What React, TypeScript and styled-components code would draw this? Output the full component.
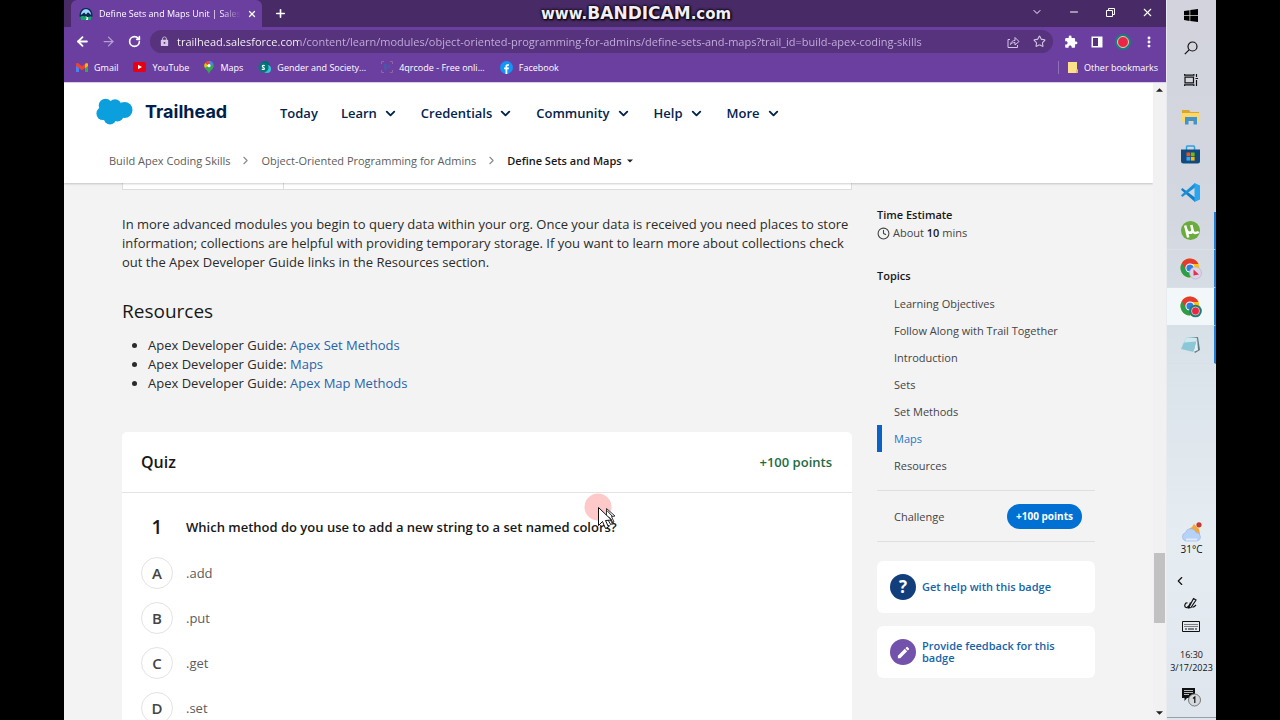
import React from 'react';
import styled, { createGlobalStyle } from 'styled-components';
import { ArrowLeft, ArrowRight, ChevronDown, ChevronLeft, ChevronRight, Clock, EllipsisVertical, Minus, Plus, RotateCw, Star, X } from 'lucide-react';
import { MdExtension, MdLock, MdModeEdit } from 'react-icons/md';

const GlobalStyle = createGlobalStyle`
  *, *::before, *::after { box-sizing: border-box; }
  body { margin: 0; background: #000; font-family: "Open Sans", "Noto Sans", sans-serif; font-size: 13px; color: #181818; }
  h1, h2, h3, p, ul, ol { margin: 0; padding: 0; }
  a { color: inherit; text-decoration: none; }
  button { font: inherit; color: inherit; background: none; border: 0; padding: 0; cursor: pointer; }
  svg { display: block; flex: none; }
`;

/* ---------- desktop ---------- */
const Desktop = styled.div`
  display: flex;
  height: 100vh;
  padding: 0 5%;
  overflow: hidden;
`;
const Browser = styled.div`
  flex: 1;
  min-width: 0;
  display: flex;
  flex-direction: column;
  background: #6b3fa0;
`;

/* ---------- browser chrome ---------- */
const TabStrip = styled.div`
  position: relative;
  display: flex;
  align-items: flex-end;
  height: 27px;
  padding-left: 7px;
  background: #482a66;
  color: #fff;
`;
const Tab = styled.div`
  display: flex;
  align-items: center;
  gap: 6px;
  width: 191px;
  height: 27px;
  padding: 0 8px;
  border-radius: 6px 6px 0 0;
  background: #6b3fa0;
`;
const TabTitle = styled.span`
  flex: 1;
  white-space: nowrap;
  font-size: 9px;
  mask-image: linear-gradient(90deg, #000 85%, transparent);
`;
const NewTab = styled.button`
  display: grid;
  place-items: center;
  width: 28px;
  height: 27px;
  margin-left: 4px;
`;
const Watermark = styled.div`
  position: absolute;
  left: 477px;
  top: 3px;
  font: bold 15px/20px "DejaVu Sans", sans-serif;
  color: #f2edf6;
  text-shadow: 0 0 3px #000, 0 0 3px #000, 1px 1px 2px #000;
  white-space: nowrap;
  b { font-size: 17px; }
`;
const WindowControls = styled.div`
  display: flex;
  align-self: flex-start;
  margin-left: auto;
`;
const WindowButton = styled.button`
  display: grid;
  place-items: center;
  width: 37px;
  height: 24px;
`;
const Toolbar = styled.div`
  display: flex;
  align-items: center;
  height: 29px;
  padding: 0 4px 0 5px;
  color: #fff;
`;
const ToolButton = styled.button<{ $faded?: boolean }>`
  display: grid;
  place-items: center;
  width: 26px;
  height: 22px;
  opacity: ${(p) => (p.$faded ? 0.5 : 1)};
`;
const AddressBar = styled.div`
  display: flex;
  flex: 1;
  align-items: center;
  height: 23px;
  margin: 0 5px 0 3px;
  padding: 0 1px 0 9px;
  border-radius: 12px;
  background: #56337c;
  color: #d5c6e6;
`;
const AddressInput = styled.input`
  flex: 1;
  min-width: 0;
  margin-left: 7px;
  padding: 0;
  border: 0;
  outline: 0;
  font: 11px/20px "Open Sans", sans-serif;
  color: transparent;
  background: linear-gradient(90deg, #fff 122px, #c9b3e0 122px) text;
`;
const Bookmarks = styled.nav`
  display: flex;
  align-items: center;
  gap: 15px;
  height: 26px;
  padding: 0 8px 4px 12px;
  font-size: 9px;
  color: #fff;
`;
const Bookmark = styled.a`
  display: flex;
  align-items: center;
  gap: 6px;
  white-space: nowrap;
`;
const OtherBookmarks = styled(Bookmark)`
  margin-left: auto;
  padding-left: 9px;
  border-left: 1px solid #9270b8;
`;

/* ---------- page ---------- */
const Viewport = styled.div`
  flex: 1;
  min-height: 0;
  display: flex;
  border-top: 1px solid #d9cfe4;
`;
const Page = styled.div`
  flex: 1;
  min-width: 0;
  overflow: hidden;
  background: #f3f3f3;
`;
const Header = styled.header`
  position: relative;
  height: 100px;
  background: #fff;
  box-shadow: 0 1px 2px rgba(0, 0, 0, 0.2);
`;
const NavRow = styled.div`
  display: flex;
  align-items: center;
  height: 60px;
  padding-left: 32px;
`;
const Brand = styled.a`
  display: flex;
  align-items: center;
  gap: 12px;
  width: 184px;
  padding-bottom: 3px;
  font: bold 18px/24px Inter, sans-serif;
  color: #001e4b;
`;
const NavList = styled.ul`
  display: flex;
  gap: 23px;
  list-style: none;
`;
const NavButton = styled.button`
  display: flex;
  align-items: center;
  gap: 6px;
  font-weight: 600;
  font-size: 13px;
  line-height: 20px;
  color: #03234d;
`;
const Breadcrumb = styled.nav`
  display: flex;
  align-items: center;
  gap: 9px;
  height: 35px;
  padding-left: 45px;
  font-size: 11px;
  color: #5c5c5c;
`;
const CurrentCrumb = styled.button`
  display: flex;
  align-items: center;
  gap: 5px;
  font-weight: 600;
  color: #181818;
`;
const Columns = styled.div`
  display: grid;
  grid-template-columns: minmax(0, 1fr) 218px;
  gap: 25px;
  padding: 0 58px;
`;
const Article = styled.article`
  min-width: 0;
`;
const TableEnd = styled.table`
  width: 100%;
  height: 6px;
  border-collapse: collapse;
  background: #fff;
  td { height: 6px; padding: 0; border: 1px solid #ddd; border-top: 0; }
  td:first-child { width: 161px; }
`;
const Paragraph = styled.p`
  margin-top: 25px;
  line-height: 19px;
  color: #2b2b2b;
`;
const SectionTitle = styled.h2`
  margin-top: 26px;
  font-size: 19px;
  font-weight: 400;
  line-height: 26px;
`;
const ResourceList = styled.ul`
  margin-top: 12px;
  padding-left: 26px;
  line-height: 19px;
  color: #2b2b2b;
  a { color: #2a62a8; }
`;
const Quiz = styled.section`
  position: relative;
  margin-top: 39px;
  border-radius: 5px;
  background: #fff;
`;
const QuizHeader = styled.header`
  display: flex;
  align-items: center;
  justify-content: space-between;
  height: 61px;
  padding: 0 20px 0 19px;
  border-bottom: 1px solid #e3e3e3;
  h2 { font-size: 16px; font-weight: 600; }
  span { font-weight: 600; color: #1d6b45; }
`;
const Question = styled.fieldset`
  margin: 0;
  padding: 0 19px;
  border: 0;
`;
const Prompt = styled.legend`
  display: grid;
  grid-template-columns: 32px 1fr;
  gap: 13px;
  align-items: center;
  width: 100%;
  height: 64px;
  padding: 4px 0 0;
  font-weight: 600;
  b { font-size: 19px; font-weight: 600; line-height: 26px; text-align: center; }
`;
const Choices = styled.div`
  display: grid;
  gap: 13px;
  padding-bottom: 24px;
`;
const Choice = styled.label`
  display: grid;
  grid-template-columns: 32px 1fr;
  column-gap: 13px;
  align-items: center;
  height: 32px;
  color: #5c5c5c;
`;
const ChoiceRadio = styled.input`
  grid-area: 1 / 1;
  appearance: none;
  width: 32px;
  height: 32px;
  margin: 0;
  border: 1px solid #e3e3e3;
  border-radius: 50%;
  &:checked { border-color: #0070d2; }
`;
const ChoiceLetter = styled.span`
  grid-area: 1 / 1;
  text-align: center;
  font-size: 15px;
  font-weight: 600;
  color: #444;
`;
const Pointer = styled.div`
  position: absolute;
  left: 462px;
  top: 61px;
  pointer-events: none;
`;

/* ---------- page sidebar ---------- */
const Aside = styled.aside`
  padding-top: 22px;
  font-size: 11px;
  line-height: 19px;
  color: #444;
`;
const AsideTitle = styled.h3`
  font-size: 11px;
  font-weight: 600;
  line-height: 19px;
  color: #181818;
`;
const Estimate = styled.p`
  display: flex;
  align-items: center;
  gap: 3px;
  margin-bottom: 24px;
  line-height: 18px;
  b { font-weight: 600; color: #181818; }
`;
const TopicList = styled.ul`
  margin-top: 5px;
  list-style: none;
`;
const Topic = styled.a<{ $active?: boolean }>`
  display: block;
  padding-left: 12px;
  border-left: 5px solid ${(p) => (p.$active ? '#0b62c4' : 'transparent')};
  line-height: 27px;
  color: ${(p) => (p.$active ? '#2577c8' : '#444')};
`;
const ChallengeRow = styled.div`
  display: flex;
  align-items: center;
  justify-content: space-between;
  height: 52px;
  margin: 11px 0 19px;
  padding: 0 13px 0 17px;
  border: solid #dfdfdf;
  border-width: 1px 0;
`;
const PointsButton = styled.button`
  height: 25px;
  padding: 0 9px;
  border-radius: 13px;
  background: #0070d2;
  color: #fff;
  font-size: 10px;
  font-weight: 700;
`;
const HelpCard = styled.a`
  display: flex;
  align-items: center;
  gap: 6px;
  height: 52px;
  margin-bottom: 13px;
  padding: 0 13px;
  border-radius: 6px;
  background: #fff;
  font-size: 11px;
  font-weight: 600;
  line-height: 12px;
  color: #1664a8;
`;
const CardIcon = styled.span<{ $color: string }>`
  display: grid;
  flex: none;
  place-items: center;
  width: 26px;
  height: 26px;
  border-radius: 50%;
  background: ${(p) => p.$color};
  color: #fff;
  font: bold 17px/26px "Open Sans", sans-serif;
`;

/* ---------- scrollbar ---------- */
const Scrollbar = styled.div`
  display: flex;
  flex-direction: column;
  align-items: center;
  justify-content: space-between;
  width: 13px;
  padding: 5px 0;
  background: #f1f1f1;
`;
const Track = styled.div`
  display: flex;
  flex: 1;
  flex-direction: column;
  width: 11px;
  margin: 5px 0;
  &::before { content: ""; flex: 453; }
  &::after { content: ""; flex: 82; }
`;
const Thumb = styled.div`
  flex: 70;
  background: #c1c1c1;
`;

/* ---------- taskbar ---------- */
const Taskbar = styled.aside`
  display: flex;
  flex-direction: column;
  width: 50px;
  padding-bottom: 2px;
  border-left: 1px solid #e9ebf0;
  background: linear-gradient(#d2d3dd, #d3d7e0 30%, #dae3ea 50%, #e6edf2 75%, #dfe5ed);
  color: #111;
`;
const TaskGroup = styled.div`
  display: flex;
  flex-direction: column;
  margin-bottom: 2px;
`;
const TaskItem = styled.button<{ $small?: boolean; $running?: boolean; $active?: boolean }>`
  display: grid;
  flex: none;
  place-items: center;
  height: ${(p) => (p.$small ? 32 : 38)}px;
  border-right: 2px solid ${(p) => (p.$running ? '#1c7fd6' : 'transparent')};
  border-bottom: 1px solid ${(p) => (p.$running ? '#d8e0e9' : 'transparent')};
  background: ${(p) => (p.$active ? '#f2f7fa' : 'transparent')};
`;
const Tray = styled.div`
  display: flex;
  flex-direction: column;
  align-items: center;
  margin-top: auto;
  border-bottom: 1px solid #9aa0a8;
  font-size: 10px;
  line-height: 14px;
`;
const TrayButton = styled.button<{ $tall?: boolean; $left?: boolean }>`
  display: grid;
  place-items: center;
  width: 100%;
  height: ${(p) => (p.$tall ? 40 : 23)}px;
  padding-right: ${(p) => (p.$left ? 24 : 2)}px;
`;
const DateTime = styled.time`
  margin: 10px 0 3px;
  text-align: center;
  font-size: 9px;
  line-height: 13px;
`;
const Weather = styled.button`
  display: grid;
  justify-items: center;
  margin-bottom: 13px;
`;

/* ---------- drawings ---------- */
const TrailheadIcon = () => (
  <svg width="14" height="14" viewBox="0 0 14 14">
    <path d="M.5 9C.5 3.500 3.500 1 7 1s6.500 2.500 6.500 8L12 12.500H2z" fill="#0a2a52" />
    <path d="M1.800 8C2.200 4 4.600 2.200 7 2.200S11.800 4 12.200 8L9 5.200 7 7.500 5.200 5.500z" fill="#9fd8ff" />
    <path d="M1 10c2-1.500 4-1 6 0s4-1.500 6 0l-1.200 3H2.200z" fill="#17a36b" />
    <path d="M6 9.500l1.800 1.200L7 13h1.800l.5-2.300L7.500 9.500z" fill="#fff" />
  </svg>
);
const RestoreIcon = () => (
  <svg width="9" height="9" viewBox="0 0 9 9" fill="none" stroke="#fff">
    <path d="M.5 2.500h6v6h-6zM2.500 2.500v-2h6v6h-2" />
  </svg>
);
const ShareIcon = () => (
  <svg width="13" height="12" viewBox="0 0 13 12" fill="none" stroke="currentColor">
    <path d="M3 3.500H1v8h9.500V9M3.500 8.500C4 5.500 6 4.500 8 4.500v-3l4 4-4 3.500V6.500c-2 0-3.500.5-4.500 2z" />
  </svg>
);
const PanelIcon = () => (
  <svg width="12" height="12" viewBox="0 0 12 12">
    <path d="M.5.500h11v11H.5z" fill="#fff" />
    <path d="M2 2h5v8H2z" fill="#56337c" />
  </svg>
);
const ProfileIcon = () => (
  <svg width="16" height="16" viewBox="0 0 16 16">
    <circle cx="8" cy="8" r="8" fill="#177f7d" />
    <circle cx="8" cy="8" r="5.500" fill="#ea2648" stroke="#e8c9b8" />
  </svg>
);
const GmailIcon = () => (
  <svg width="12" height="9" viewBox="0 0 12 9">
    <path d="M0 1v8h3V3.500z" fill="#4285f4" />
    <path d="M12 1v8H9V3.500z" fill="#34a853" />
    <path d="M0 1.500C0 0 1.500-.300 2.500.500L6 3.200 9.500.500c1-.8 2.500-.5 2.500 1V3L6 7.300 0 3z" fill="#ea4335" />
    <path d="M9 1v4.200l3-2.200V1.500C12 .2 10.200-.1 9 1z" fill="#fbbc04" />
  </svg>
);
const YouTubeIcon = () => (
  <svg width="13" height="10" viewBox="0 0 13 10">
    <rect width="13" height="10" rx="2" fill="#e60012" />
    <path d="M5 2.800v4.400L9 5z" fill="#fff" />
  </svg>
);
const MapsIcon = () => (
  <svg width="10" height="13" viewBox="0 0 10 13">
    <path d="M5 0a4.700 4.700 0 0 0-4.700 4.700C.3 8 4 9 5 13c1-4 4.700-5 4.700-8.300A4.700 4.700 0 0 0 5 0z" fill="#34a853" />
    <path d="M1.200 2L5 4.700.8 6.800C0 5 .2 3.300 1.200 2z" fill="#fbbc04" />
    <path d="M1.200 2A4.700 4.700 0 0 1 5 0v4.700z" fill="#ea4335" />
    <path d="M5 0c2.400 0 4 1.500 4.500 3.200L5 4.700z" fill="#4285f4" />
    <circle cx="5" cy="4.700" r="1.600" fill="#fff" />
  </svg>
);
const SharePointIcon = () => (
  <svg width="13" height="13" viewBox="0 0 13 13">
    <circle cx="7" cy="5" r="5" fill="#036c70" />
    <circle cx="9" cy="8" r="4" fill="#37c6d0" />
    <circle cx="5.500" cy="6.500" r="5" fill="#03787c" />
    <path d="M6.800 4.800C5 3.800 3.300 5.300 5.200 6.300S6.800 9 3.800 8.200" fill="none" stroke="#fff" strokeWidth="1.200" />
  </svg>
);
const QrIcon = () => (
  <svg width="12" height="12" viewBox="0 0 12 12" fill="none" opacity=".8">
    <path d="M.5 3V.500H3M9 .500h2.500V3M11.500 9v2.500H9M3 11.500H.500V9" stroke="#9a6fa0" />
    <path d="M3 3h3v6H3zM7 4h2v3H7z" fill="#4a58a8" />
  </svg>
);
const FacebookIcon = () => (
  <svg width="13" height="13" viewBox="0 0 13 13">
    <circle cx="6.500" cy="6.500" r="6.500" fill="#1196f5" />
    <path d="M5.500 13V8.300H4V6.500h1.500V5.200C5.500 3.500 6.500 3 9 3.200v1.500c-1.300 0-1.700 0-1.700.8v1H9l-.3 1.800H7.300V13z" fill="#fff" />
  </svg>
);
const FolderIcon = () => (
  <svg width="10" height="12" viewBox="0 0 10 12">
    <path d="M0 1h9v7.500h1V12H0z" fill="#ffe08a" />
    <path d="M8 9h2v3H8z" fill="#e8bd55" />
  </svg>
);
const CloudLogo = () => (
  <svg width="37" height="27" viewBox="0 0 37 27" fill="#0c9fde">
    <circle cx="9.500" cy="7.500" r="6.800" />
    <circle cx="19" cy="7.500" r="6.300" />
    <circle cx="28.500" cy="12" r="8" />
    <circle cx="7" cy="15.500" r="6.600" />
    <circle cx="14" cy="20" r="6.400" />
    <circle cx="21.500" cy="17.500" r="6" />
    <path d="M6 8h24v9H6z" />
  </svg>
);
const Triangle = ({ up = false, size = 7 }: { up?: boolean; size?: number }) => (
  <svg width={size} height="4" viewBox="0 0 8 4">
    <path d={up ? 'M4 0l4 4H0z' : 'M0 0h8L4 4z'} fill="#222" />
  </svg>
);
const ClickPointer = () => (
  <svg width="36" height="40" viewBox="0 0 36 40">
    <circle cx="14" cy="14" r="13.500" fill="#fdc9c9" />
    <path d="M22.500 15.500v10l2.500-1.500 3 6 2-1-2.500-5.500 3.500-.5z" fill="#fff" stroke="#333" />
    <path d="M14.500 14.500v18l4-4 3 7 3-1.500-3-6.500 6-.5z" fill="#fff" stroke="#111" />
    <path d="M23 17.500l5.500 6M24 27l3 5M26.500 25.500l2.500 4.500" fill="none" stroke="#222" />
  </svg>
);
const WindowsIcon = () => (
  <svg width="14" height="13" viewBox="0 0 14 13">
    <path d="M0 2l5.500-.8v5H0zM6.300 1.100L14 0v6.200H6.300zM0 6.900h5.500v5L0 11.100zM6.300 6.900H14V13l-7.700-1z" fill="#000" />
  </svg>
);
const SearchGlyph = () => (
  <svg width="14" height="14" viewBox="0 0 14 14" fill="none" stroke="#111" strokeWidth="1.200">
    <circle cx="8.500" cy="5.500" r="4.500" />
    <path d="M5.300 8.700L.8 13.200" />
  </svg>
);
const TaskViewIcon = () => (
  <svg width="14" height="12" viewBox="0 0 14 12" fill="none" stroke="#111" strokeWidth="1.200">
    <path d="M1 3.200h8.500v5.600H1zM.6 0v1.200h9.300V0M.6 12v-1.200h9.300V12M12.500 0v3M12.500 6v6M11.500 4.500h2.500" />
  </svg>
);
const ExplorerIcon = () => (
  <svg width="18" height="16" viewBox="0 0 18 16">
    <path d="M0 1h7l1.500 2H17v4H0z" fill="#dda52e" />
    <path d="M0 4h17.500v9H0z" fill="#fdd768" />
    <path d="M3 8h12v7.500h-3.500V12h-5v3.500H3z" fill="#3f93d0" />
  </svg>
);
const StoreIcon = () => (
  <svg width="19" height="19" viewBox="0 0 19 19">
    <path d="M5.500 5V2q0-1 1-1h6q1 0 1 1v3" fill="none" stroke="#2aa3e0" strokeWidth="1.500" />
    <path d="M0 4.500h19V16q0 2.500-2.500 2.500h-14Q0 18.500 0 16z" fill="#124a80" />
    <path d="M5.500 7.500h3.700v3.700H5.500z" fill="#f25022" />
    <path d="M9.900 7.500h3.700v3.700H9.900z" fill="#7fba00" />
    <path d="M5.500 11.900h3.700v3.700H5.500z" fill="#35a9ec" />
    <path d="M9.900 11.900h3.700v3.700H9.900z" fill="#ffb900" />
  </svg>
);
const VsCodeIcon = () => (
  <svg width="19" height="19" viewBox="0 0 19 19">
    <path d="M1.300 5L14 14.500V19L0 6.800z" fill="#0e7fc9" />
    <path d="M1.300 14L14 4.500V0L0 12.200z" fill="#1a8fda" />
    <path d="M13.500 0L19 2.500v14L13.500 19z" fill="#2aa5ee" />
  </svg>
);
const TorrentIcon = () => (
  <svg width="19" height="19" viewBox="0 0 19 19">
    <circle cx="9.500" cy="9.500" r="9.500" fill="#6aac3d" />
    <path d="M4.200 4.500l3 12M5.300 8.500c.8 4 5.700 4.500 6.200.5M10.300 4l1.500 6c.6 2.300 3 2.500 6 1" fill="none" stroke="#fff" strokeWidth="2.500" />
  </svg>
);
const ChromeIcon = ({ badge }: { badge: 'photo' | 'record' }) => (
  <svg width="22" height="22" viewBox="0 0 22 22">
    <circle cx="10" cy="10" r="9.500" fill="#fbc116" />
    <path d="M10 10L1.800 5.200A9.500 9.500 0 0 0 10 19.500l3-5z" fill="#2b9e4a" />
    <path d="M1.800 5.200A9.500 9.500 0 0 1 18.500 6H10L6 12z" fill="#e33b2e" />
    <circle cx="10" cy="10" r="4.600" fill="#fff" />
    <circle cx="10" cy="10" r="3.600" fill="#2f7de1" />
    {badge === 'photo' ? (
      <>
        <circle cx="15.500" cy="15" r="6" fill="#dcd3e6" stroke="#b7a9cc" strokeWidth=".6" />
        <path d="M13.500 11.500l5.500 5-5.500 1z" fill="#d93655" />
      </>
    ) : (
      <>
        <circle cx="15.500" cy="15" r="6.300" fill="#177f7d" />
        <circle cx="15.500" cy="15" r="4" fill="#ea2648" stroke="#e8c9b8" strokeWidth=".8" />
      </>
    )}
  </svg>
);
const NotepadIcon = () => (
  <svg width="19" height="18" viewBox="0 0 19 18">
    <path d="M5 2l12-1 2 13-5 3z" fill="#5d7d86" />
    <path d="M5 1.500l11 .5-3.500 14L0 13z" fill="#8cc7d8" />
    <path d="M5 1.500l11 .5-1 3.500-12 1z" fill="#cfe8ee" />
    <path d="M12.500 16L16 2l1 12z" fill="#e9eef0" />
  </svg>
);
const WeatherIcon = () => (
  <svg width="21" height="20" viewBox="0 0 21 20">
    <path d="M8 7l3-2 2-3 5 5 1 5-4 3z" fill="#f5a83b" />
    <circle cx="18" cy="2.800" r="2.600" fill="#c83a2c" />
    <path d="M4.500 19a4.500 4.500 0 0 1 0-8.500 5.500 5.500 0 0 1 10.500 0 4.300 4.300 0 0 1 1 8.500z" fill="#b6d2f7" stroke="#8fb4e8" strokeWidth=".6" />
    <path d="M5 17.500h11" stroke="#dfeafc" strokeWidth="2" />
  </svg>
);
const PenIcon = () => (
  <svg width="13" height="13" viewBox="0 0 13 13" fill="none" stroke="#111" strokeWidth="1.200">
    <path d="M4.500 11L9.500 1.500 12 3 7 10.500zM3.500 6C.5 5.500 0 10 2 10.500s4-3 4.500-5M8.500 10c1 .5 2-.5 3.500-2" />
  </svg>
);
const KeyboardIcon = () => (
  <svg width="18" height="11" viewBox="0 0 18 11" fill="none" stroke="#111">
    <path d="M.5.500h17v10H.5z" />
    <path d="M2.500 3.500h13M2.500 5.500h13" strokeDasharray="1 1" />
    <path d="M3 8h2M6 8h6M13 8h2" />
  </svg>
);
const NotificationIcon = () => (
  <svg width="20" height="20" viewBox="0 0 20 20">
    <path d="M1 1h13v10H6l-2.500 3v-3H1z" fill="#111" />
    <path d="M3 3.500h9M3 5.500h9M3 7.500h5" stroke="#dfe5ed" strokeWidth=".8" />
    <circle cx="13.500" cy="13" r="6" fill="#d5d8dc" stroke="#777" />
    <path d="M12 11.500l1.800-1.500v6" fill="none" stroke="#111" strokeWidth="1.200" />
  </svg>
);

/* ---------- data ---------- */
const bookmarks = [
  { label: 'Gmail', icon: <GmailIcon /> },
  { label: 'YouTube', icon: <YouTubeIcon /> },
  { label: 'Maps', icon: <MapsIcon /> },
  { label: 'Gender and Society...', icon: <SharePointIcon /> },
  { label: '4qrcode - Free onli...', icon: <QrIcon /> },
  { label: 'Facebook', icon: <FacebookIcon /> },
];
const menus = ['Learn', 'Credentials', 'Community', 'Help', 'More'];
const resources = ['Apex Set Methods', 'Maps', 'Apex Map Methods'];
const answers = [['A', '.add'], ['B', '.put'], ['C', '.get'], ['D', '.set']];
const topics = ['Learning Objectives', 'Follow Along with Trail Together', 'Introduction', 'Sets', 'Set Methods', 'Maps', 'Resources'];

export default function App() {
  return (
    <Desktop>
      <GlobalStyle />
      <Browser>
        <TabStrip>
          <Tab>
            <TrailheadIcon />
            <TabTitle>Define Sets and Maps Unit | Sales</TabTitle>
            <button aria-label="Close tab"><X size={10} strokeWidth={3} /></button>
          </Tab>
          <NewTab aria-label="New tab"><Plus size={13} strokeWidth={3} /></NewTab>
          <Watermark>www.<b>BANDICAM</b>.com</Watermark>
          <WindowControls>
            <WindowButton aria-label="Search tabs"><ChevronDown size={12} /></WindowButton>
            <WindowButton aria-label="Minimize"><Minus size={12} /></WindowButton>
            <WindowButton aria-label="Restore"><RestoreIcon /></WindowButton>
            <WindowButton aria-label="Close"><X size={13} /></WindowButton>
          </WindowControls>
        </TabStrip>
        <Toolbar>
          <ToolButton aria-label="Back"><ArrowLeft size={15} strokeWidth={3} /></ToolButton>
          <ToolButton aria-label="Forward" $faded><ArrowRight size={15} strokeWidth={2} /></ToolButton>
          <ToolButton aria-label="Reload"><RotateCw size={13} strokeWidth={3} /></ToolButton>
          <AddressBar>
            <MdLock size={11} />
            <AddressInput
              aria-label="Address"
              defaultValue="trailhead.salesforce.com/content/learn/modules/object-oriented-programming-for-admins/define-sets-and-maps?trail_id=build-apex-coding-skills"
            />
            <ToolButton aria-label="Share"><ShareIcon /></ToolButton>
            <ToolButton aria-label="Bookmark"><Star size={13} strokeWidth={2} /></ToolButton>
          </AddressBar>
          <ToolButton aria-label="Extensions"><MdExtension size={14} /></ToolButton>
          <ToolButton aria-label="Side panel"><PanelIcon /></ToolButton>
          <ToolButton aria-label="Profile"><ProfileIcon /></ToolButton>
          <ToolButton aria-label="Menu"><EllipsisVertical size={14} strokeWidth={3} /></ToolButton>
        </Toolbar>
        <Bookmarks aria-label="Bookmarks">
          {bookmarks.map((b) => (
            <Bookmark key={b.label} href="#">{b.icon}{b.label}</Bookmark>
          ))}
          <OtherBookmarks href="#"><FolderIcon />Other bookmarks</OtherBookmarks>
        </Bookmarks>

        <Viewport>
          <Page>
            <Header>
              <NavRow>
                <Brand href="#"><CloudLogo />Trailhead</Brand>
                <NavList>
                  <li><NavButton as="a" href="#">Today</NavButton></li>
                  {menus.map((m) => (
                    <li key={m}><NavButton>{m}<ChevronDown size={15} strokeWidth={3} /></NavButton></li>
                  ))}
                </NavList>
              </NavRow>
              <Breadcrumb aria-label="Breadcrumb">
                <a href="#">Build Apex Coding Skills</a>
                <ChevronRight size={13} color="#888" />
                <a href="#">Object-Oriented Programming for Admins</a>
                <ChevronRight size={13} color="#888" />
                <CurrentCrumb>Define Sets and Maps<Triangle size={6} /></CurrentCrumb>
              </Breadcrumb>
            </Header>

            <Columns>
              <Article>
                <TableEnd><tbody><tr><td /><td /></tr></tbody></TableEnd>
                <Paragraph>
                  In more advanced modules you begin to query data within your org. Once your data is received you need places to store information; collections are helpful with providing temporary storage. If you want to learn more about collections check out the Apex Developer Guide links in the Resources section.
                </Paragraph>
                <SectionTitle>Resources</SectionTitle>
                <ResourceList>
                  {resources.map((r) => (
                    <li key={r}>Apex Developer Guide: <a href="#">{r}</a></li>
                  ))}
                </ResourceList>
                <Quiz>
                  <QuizHeader><h2>Quiz</h2><span>+100 points</span></QuizHeader>
                  <Question>
                    <Prompt><b>1</b>Which method do you use to add a new string to a set named colors?</Prompt>
                    <Choices>
                      {answers.map(([letter, text]) => (
                        <Choice key={letter}>
                          <ChoiceRadio type="radio" name="question-1" value={letter} />
                          <ChoiceLetter>{letter}</ChoiceLetter>
                          {text}
                        </Choice>
                      ))}
                    </Choices>
                  </Question>
                  <Pointer><ClickPointer /></Pointer>
                </Quiz>
              </Article>

              <Aside>
                <AsideTitle>Time Estimate</AsideTitle>
                <Estimate><Clock size={13} /><span>About <b>10</b> mins</span></Estimate>
                <AsideTitle>Topics</AsideTitle>
                <TopicList>
                  {topics.map((t) => (
                    <li key={t}><Topic href="#" $active={t === 'Maps'}>{t}</Topic></li>
                  ))}
                </TopicList>
                <ChallengeRow>
                  <a href="#">Challenge</a>
                  <PointsButton>+100 points</PointsButton>
                </ChallengeRow>
                <HelpCard href="#"><CardIcon $color="#123f7c">?</CardIcon>Get help with this badge</HelpCard>
                <HelpCard href="#"><CardIcon $color="#7252aa"><MdModeEdit size={15} /></CardIcon>Provide feedback for this badge</HelpCard>
              </Aside>
            </Columns>
          </Page>
          <Scrollbar>
            <Triangle up size={7} />
            <Track><Thumb /></Track>
            <Triangle size={7} />
          </Scrollbar>
        </Viewport>
      </Browser>

      <Taskbar aria-label="Taskbar">
        <TaskGroup>
          <TaskItem $small aria-label="Start"><WindowsIcon /></TaskItem>
          <TaskItem $small aria-label="Search"><SearchGlyph /></TaskItem>
          <TaskItem $small aria-label="Task view"><TaskViewIcon /></TaskItem>
        </TaskGroup>
        <TaskItem aria-label="File Explorer"><ExplorerIcon /></TaskItem>
        <TaskItem aria-label="Store"><StoreIcon /></TaskItem>
        <TaskItem aria-label="Code editor"><VsCodeIcon /></TaskItem>
        <TaskItem $running aria-label="Torrent client"><TorrentIcon /></TaskItem>
        <TaskItem $running aria-label="Chrome, first profile"><ChromeIcon badge="photo" /></TaskItem>
        <TaskItem $running $active aria-label="Chrome, second profile"><ChromeIcon badge="record" /></TaskItem>
        <TaskItem $running aria-label="Notepad"><NotepadIcon /></TaskItem>
        <Tray>
          <Weather><WeatherIcon />31°C</Weather>
          <TrayButton $left aria-label="Show hidden icons"><ChevronLeft size={14} /></TrayButton>
          <TrayButton aria-label="Pen"><PenIcon /></TrayButton>
          <TrayButton aria-label="Touch keyboard"><KeyboardIcon /></TrayButton>
          <DateTime dateTime="2023-03-17T16:30">16:30<br />3/17/2023</DateTime>
          <TrayButton $tall aria-label="Notifications"><NotificationIcon /></TrayButton>
        </Tray>
      </Taskbar>
    </Desktop>
  );
}
